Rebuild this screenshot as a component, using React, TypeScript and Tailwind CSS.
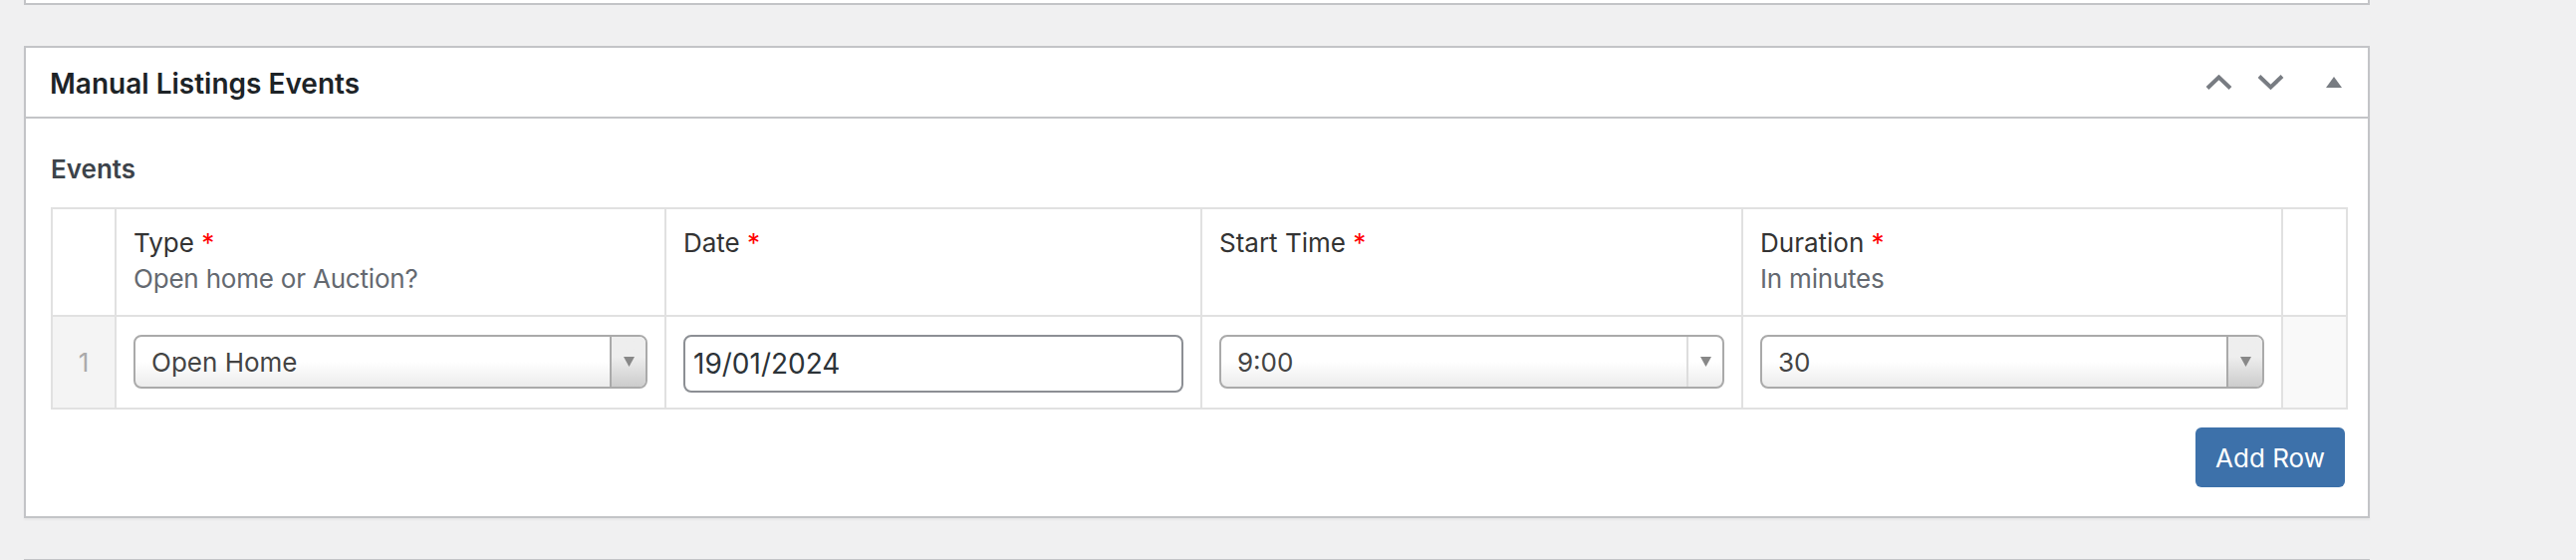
import React from 'react'

function Chevron({ up }: { up?: boolean }) {
  return (
    <svg width="27" height="15" viewBox="0 0 27 15" className="block">
      <path
        d={up ? 'M2 13.5 L13.5 2.5 L25 13.5' : 'M2 1.5 L13.5 12.5 L25 1.5'}
        fill="none"
        stroke="#787c82"
        strokeWidth="4"
      />
    </svg>
  )
}

function Caret() {
  return (
    <svg width="11" height="10" viewBox="0 0 11 10" className="block">
      <path d="M0 0 H11 L5.5 10 Z" fill="#888888" />
    </svg>
  )
}

function Select({ value, shaded = true }: { value: string; shaded?: boolean }) {
  return (
    <div className="flex h-[54px] w-full overflow-hidden rounded-[8px] border-2 border-[#aaaaaa] bg-linear-to-t from-[#ececec] to-white to-50%">
      <div className="flex flex-1 items-center pl-[16px] text-[26px] text-[#444444]">{value}</div>
      {shaded ? (
        <div className="flex w-[36px] items-center justify-center border-l-2 border-[#aaaaaa] bg-linear-to-t from-[#cccccc] to-[#eeeeee] to-60%">
          <Caret />
        </div>
      ) : (
        <div className="flex w-[36px] items-center justify-center border-l-2 border-[#dddddd]">
          <Caret />
        </div>
      )}
    </div>
  )
}

function HeadCell({ label, hint }: { label?: string; hint?: string }) {
  return (
    <div className="h-[108px] border-r-2 border-b-2 border-[#e1e1e1] px-[17px] pt-[16px] text-[26px] leading-[36px]">
      {label && (
        <div className="text-[#333333]">
          {label} <span className="text-[#ff0000]">*</span>
        </div>
      )}
      {hint && <div className="tracking-[-0.2px] text-[#646970]">{hint}</div>}
    </div>
  )
}

export default function App() {
  return (
    <div className="min-h-screen overflow-hidden bg-[#f0f0f1] font-['Inter',_'Noto_Sans',_sans-serif]">
      {/* tail of the box above */}
      <div className="ml-[24px] h-[5px] w-[2355px] border-x-2 border-b-2 border-[#c3c4c7] bg-white" />

      <section className="ml-[24px] mt-[41px] w-[2355px] border-2 border-[#c3c4c7] bg-white shadow-[0_2px_2px_rgba(0,0,0,0.04)]">
        <header className="flex h-[71px] items-center justify-between border-b-2 border-[#c3c4c7] pl-[24px] pr-[26px]">
          <h2 className="pt-[3px] text-[28px] font-semibold text-[#1d2327]">Manual Listings Events</h2>
          <div className="flex items-center">
            <Chevron up />
            <div className="ml-[25px]">
              <Chevron />
            </div>
            <svg width="16" height="11" viewBox="0 0 16 11" className="ml-[42px] block">
              <path d="M8 0 L16 11 H0 Z" fill="#787c82" />
            </svg>
          </div>
        </header>

        <div className="pl-[25px] pr-[20px] pt-[33px] pb-[29px]">
          <div className="text-[26px] font-semibold leading-[36px] text-[#3c434a]">Events</div>

          <div className="mt-[20px] grid grid-cols-[64px_552px_538px_543px_542px_65px] border-l-2 border-t-2 border-[#e1e1e1]">
            <HeadCell />
            <HeadCell label="Type" hint="Open home or Auction?" />
            <HeadCell label="Date" />
            <HeadCell label="Start Time" />
            <HeadCell label="Duration" hint="In minutes" />
            <HeadCell />

            <div className="flex h-[93px] items-center justify-center border-r-2 border-b-2 border-[#e1e1e1] bg-[#f4f4f4] text-[26px] text-[#aaaaaa]">
              1
            </div>
            <div className="h-[93px] border-r-2 border-b-2 border-[#e1e1e1] px-[17px] pt-[18px]">
              <Select value="Open Home" />
            </div>
            <div className="h-[93px] border-r-2 border-b-2 border-[#e1e1e1] px-[17px] pt-[18px]">
              <div className="flex h-[58px] items-center rounded-[8px] border-2 border-[#8c8f94] px-[8px] text-[28px] text-[#2c3338]">
                19/01/2024
              </div>
            </div>
            <div className="h-[93px] border-r-2 border-b-2 border-[#e1e1e1] px-[17px] pt-[18px]">
              <Select value="9:00" shaded={false} />
            </div>
            <div className="h-[93px] border-r-2 border-b-2 border-[#e1e1e1] px-[17px] pt-[18px]">
              <Select value="30" />
            </div>
            <div className="h-[93px] border-r-2 border-b-2 border-[#e1e1e1] bg-[#f9f9f9]" />
          </div>

          <div className="mt-[18px] flex justify-end pr-[3px]">
            <button className="h-[60px] w-[150px] rounded-[6px] bg-[#3d71aa] text-[26px] text-white">Add Row</button>
          </div>
        </div>
      </section>

      <div className="ml-[24px] mt-[41px] h-[20px] w-[2355px] border-x-2 border-t-2 border-[#c3c4c7] bg-white" />
    </div>
  )
}
